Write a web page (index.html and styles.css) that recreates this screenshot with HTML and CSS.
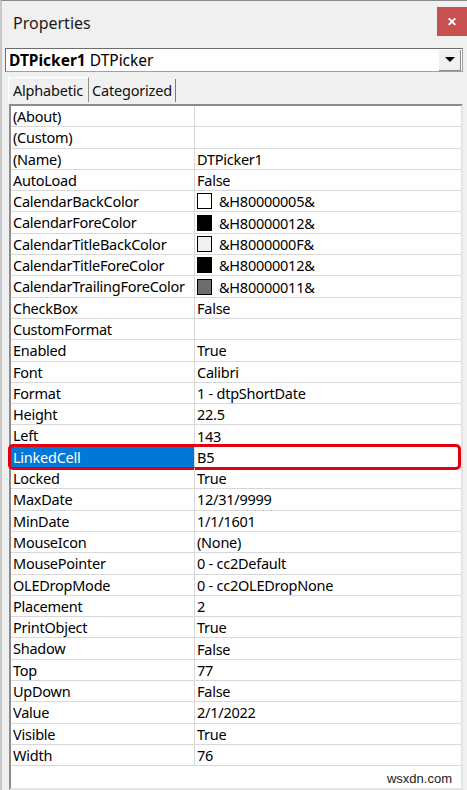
FILE: index.html
```html
<!DOCTYPE html>
<html>
<head>
  <link rel="stylesheet" href="styles.css">
</head>
<body>
<div class="window">
  <div class="titlebar">
    <span class="title">Properties</span>
    <span class="close">&#x2715;</span>
  </div>

  <div class="combo">
    <span class="combo-text"><b>DTPicker1</b> DTPicker</span>
    <span class="combo-btn"><span class="arrow"></span></span>
  </div>

  <div class="tabs">
    <div class="tab active">Alphabetic</div>
    <div class="tab">Categorized</div>
  </div>

  <div class="grid">
    <div class="row"><div class="name">(About)</div><div class="value"></div></div>
    <div class="row"><div class="name">(Custom)</div><div class="value"></div></div>
    <div class="row"><div class="name">(Name)</div><div class="value">DTPicker1</div></div>
    <div class="row"><div class="name">AutoLoad</div><div class="value">False</div></div>
    <div class="row"><div class="name">CalendarBackColor</div><div class="value"><span class="swatch white"></span>&amp;H80000005&amp;</div></div>
    <div class="row"><div class="name">CalendarForeColor</div><div class="value"><span class="swatch black"></span>&amp;H80000012&amp;</div></div>
    <div class="row"><div class="name">CalendarTitleBackColor</div><div class="value"><span class="swatch light"></span>&amp;H8000000F&amp;</div></div>
    <div class="row"><div class="name">CalendarTitleForeColor</div><div class="value"><span class="swatch black"></span>&amp;H80000012&amp;</div></div>
    <div class="row"><div class="name">CalendarTrailingForeColor</div><div class="value"><span class="swatch grey"></span>&amp;H80000011&amp;</div></div>
    <div class="row"><div class="name">CheckBox</div><div class="value">False</div></div>
    <div class="row"><div class="name">CustomFormat</div><div class="value"></div></div>
    <div class="row"><div class="name">Enabled</div><div class="value">True</div></div>
    <div class="row"><div class="name">Font</div><div class="value">Calibri</div></div>
    <div class="row"><div class="name">Format</div><div class="value">1 - dtpShortDate</div></div>
    <div class="row"><div class="name">Height</div><div class="value">22.5</div></div>
    <div class="row"><div class="name">Left</div><div class="value">143</div></div>
    <div class="row selected"><div class="name">LinkedCell</div><div class="value">B5</div></div>
    <div class="row"><div class="name">Locked</div><div class="value">True</div></div>
    <div class="row"><div class="name">MaxDate</div><div class="value">12/31/9999</div></div>
    <div class="row"><div class="name">MinDate</div><div class="value">1/1/1601</div></div>
    <div class="row"><div class="name">MouseIcon</div><div class="value">(None)</div></div>
    <div class="row"><div class="name">MousePointer</div><div class="value">0 - cc2Default</div></div>
    <div class="row"><div class="name">OLEDropMode</div><div class="value">0 - cc2OLEDropNone</div></div>
    <div class="row"><div class="name">Placement</div><div class="value">2</div></div>
    <div class="row"><div class="name">PrintObject</div><div class="value">True</div></div>
    <div class="row"><div class="name">Shadow</div><div class="value">False</div></div>
    <div class="row"><div class="name">Top</div><div class="value">77</div></div>
    <div class="row"><div class="name">UpDown</div><div class="value">False</div></div>
    <div class="row"><div class="name">Value</div><div class="value">2/1/2022</div></div>
    <div class="row"><div class="name">Visible</div><div class="value">True</div></div>
    <div class="row"><div class="name">Width</div><div class="value">76</div></div>
    <div class="filler"><span class="mark">wsxdn.com</span></div>
  </div>
</div>
</body>
</html>
```

FILE: styles.css
```css
body {
  margin: 0;
  background-color: #f0f0f0;
  font-family: "Noto Sans", "Open Sans", sans-serif;
  color: #000000;
}

.window {
  height: 790px;
  box-sizing: border-box;
  border-top: 1px solid #8a8a8a;
  border-left: 2px solid #c8c8c8;
  padding-left: 3px;
}

.titlebar {
  display: flex;
  justify-content: space-between;
  align-items: center;
  height: 47px;
}

.title {
  font-size: 16px;
  margin-left: 8px;
  margin-top: -3px;
  color: #1a1a1a;
}

.close {
  width: 30px;
  height: 29px;
  margin-top: -7px;
  background-color: #c75050;
  color: #ffffff;
  font-size: 12px;
  font-weight: bold;
  display: flex;
  justify-content: center;
  align-items: center;
}

.combo {
  display: flex;
  align-items: center;
  height: 24px;
  margin-right: 4px;
  box-sizing: border-box;
  background-color: #ffffff;
  border: 1px solid #a0a0a0;
  border-top-color: #6d6d6d;
  border-left-color: #6d6d6d;
}

.combo-text {
  flex: 1;
  font-size: 15.5px;
  padding-left: 3px;
}

.combo-btn {
  width: 21px;
  height: 20px;
  margin-right: 1px;
  background-color: #f0f0f0;
  border-right: 1px solid #8a8a8a;
  border-bottom: 1px solid #8a8a8a;
  display: flex;
  justify-content: center;
  align-items: center;
}

.arrow {
  width: 0;
  height: 0;
  border-left: 5px solid transparent;
  border-right: 5px solid transparent;
  border-top: 5px solid #000000;
}

.tabs {
  display: flex;
  margin-top: 5px;
  margin-left: 3px;
  height: 25px;
}

.tab {
  font-size: 14.5px;
  letter-spacing: -0.2px;
  padding: 0 3px;
  line-height: 22px;
  margin-top: 2px;
  border-right: 1px solid #7a7a7a;
  color: #111111;
}

.tab.active {
  margin-top: 0;
  padding: 0 5px 0 4px;
  line-height: 24px;
  border-left: 1px solid #ffffff;
  border-top: 1px solid #ffffff;
  border-right: 1px solid #8c8c8c;
}

.grid {
  margin: 2px 4px 0 4px;
  height: 686px;
  box-sizing: border-box;
  background-color: #ffffff;
  border-top: 2px solid #8c8c8c;
  border-left: 2px solid #8c8c8c;
  border-right: 2px solid #e4e4e4;
  border-bottom: 2px solid #e4e4e4;
  display: flex;
  flex-direction: column;
}

.row {
  display: grid;
  grid-template-columns: 184px 1fr;
  height: 21.3px;
  box-sizing: border-box;
  border-bottom: 1px solid #d8d8d8;
  font-size: 14.5px;
  letter-spacing: -0.25px;
  line-height: 20px;
  position: relative;
}

.name {
  padding-left: 2px;
  border-right: 1px solid #d8d8d8;
  white-space: nowrap;
  overflow: hidden;
}

.value {
  padding-left: 2px;
  display: flex;
  align-items: center;
  white-space: nowrap;
}

.swatch {
  width: 15px;
  height: 16px;
  box-sizing: border-box;
  border: 1px solid #000000;
  margin-right: 7px;
}

.swatch.white { background-color: #ffffff; }
.swatch.black { background-color: #000000; }
.swatch.light { background-color: #f0f0f0; }
.swatch.grey { background-color: #6d6d6d; }

.row.selected .name {
  background-color: #0078d7;
  color: #ffffff;
}

/* red marker drawn over the selected row */
.row.selected::after {
  content: "";
  position: absolute;
  left: -3px;
  right: 0;
  top: -3px;
  bottom: -3px;
  border: 3px solid #e0000e;
  border-radius: 5px;
}

.filler {
  flex: 1;
  position: relative;
}

.mark {
  position: absolute;
  right: 9px;
  bottom: 2px;
  font-family: "Liberation Sans", sans-serif;
  font-size: 13px;
  color: #222222;
}
```
